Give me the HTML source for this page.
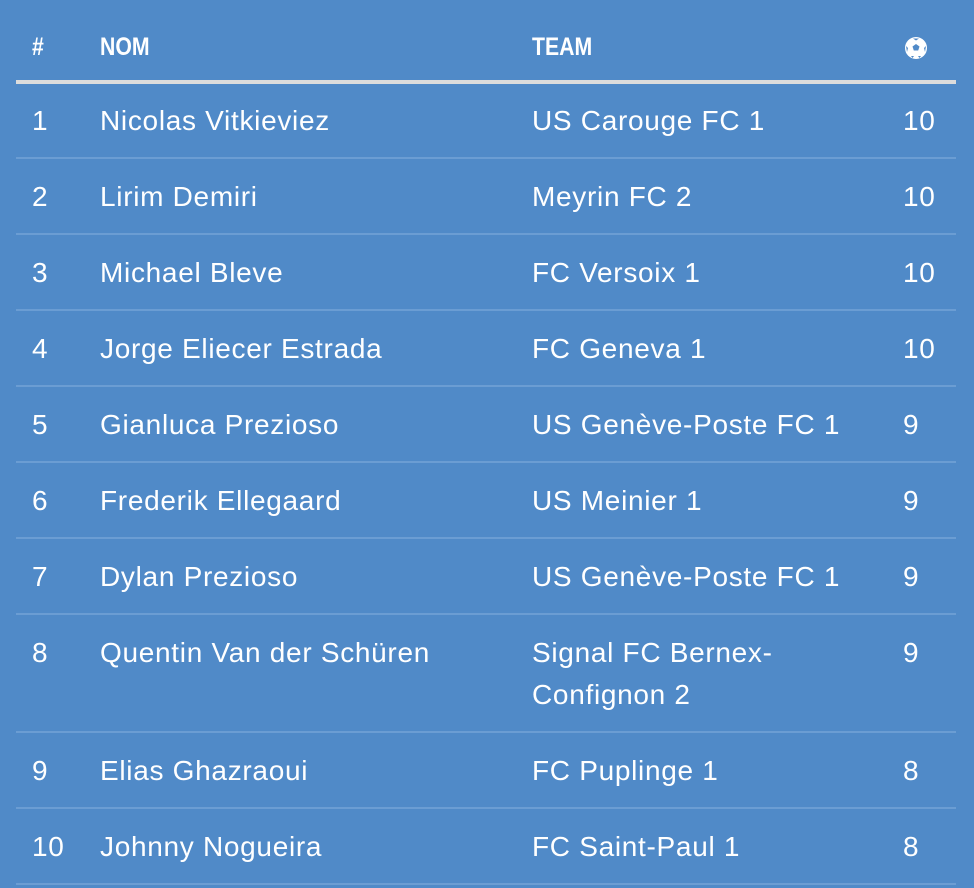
<!DOCTYPE html>
<html><head><meta charset="utf-8"><style>
html,body{margin:0;padding:0;width:974px;height:888px;background:#508ac8;overflow:hidden;font-family:"Liberation Sans",Arial,sans-serif;color:#fff}
.h{position:absolute;top:33px;font-weight:bold;font-size:25px;transform:scaleX(0.85);transform-origin:left}
.hl{position:absolute;left:16px;width:940px;top:80px;height:4px;background:#dcdcdc}
.l{position:absolute;left:16px;width:940px;height:2px;background:#6b9dd3}
.t{position:absolute;font-size:28px;line-height:42px;letter-spacing:0.7px;white-space:nowrap}
</style></head><body>
<div class="h" style="left:32px">#</div>
<div class="h" style="left:100px">NOM</div>
<div class="h" style="left:532px">TEAM</div>
<svg style="position:absolute;left:904px;top:36px" width="24" height="24" viewBox="0 0 24 24"><circle cx="12" cy="12" r="11" fill="#fff"/><polygon points="12,8 15.5,10.5 14.2,14.5 9.8,14.5 8.5,10.5" fill="#508ac8"/><path d="M9 2.5 L12 4.5 L15 2.5 Z M2 10 L4 12 L3 16 Z M22 10 L20 12 L21 16 Z M7 20 L10 20 L8.5 22 Z M17 20 L14 20 L15.5 22 Z" fill="#508ac8"/></svg>
<div class="hl"></div>

<div class="t" style="left:32px;top:100px">1</div><div class="t" style="left:100px;top:100px">Nicolas Vitkieviez</div><div class="t" style="left:532px;top:100px">US Carouge FC 1</div><div class="t" style="left:903px;top:100px">10</div>
<div class="l" style="top:157px"></div>
<div class="t" style="left:32px;top:176px">2</div><div class="t" style="left:100px;top:176px">Lirim Demiri</div><div class="t" style="left:532px;top:176px">Meyrin FC 2</div><div class="t" style="left:903px;top:176px">10</div>
<div class="l" style="top:233px"></div>
<div class="t" style="left:32px;top:252px">3</div><div class="t" style="left:100px;top:252px">Michael Bleve</div><div class="t" style="left:532px;top:252px">FC Versoix 1</div><div class="t" style="left:903px;top:252px">10</div>
<div class="l" style="top:309px"></div>
<div class="t" style="left:32px;top:328px">4</div><div class="t" style="left:100px;top:328px">Jorge Eliecer Estrada</div><div class="t" style="left:532px;top:328px">FC Geneva 1</div><div class="t" style="left:903px;top:328px">10</div>
<div class="l" style="top:385px"></div>
<div class="t" style="left:32px;top:404px">5</div><div class="t" style="left:100px;top:404px">Gianluca Prezioso</div><div class="t" style="left:532px;top:404px">US Genève-Poste FC 1</div><div class="t" style="left:903px;top:404px">9</div>
<div class="l" style="top:461px"></div>
<div class="t" style="left:32px;top:480px">6</div><div class="t" style="left:100px;top:480px">Frederik Ellegaard</div><div class="t" style="left:532px;top:480px">US Meinier 1</div><div class="t" style="left:903px;top:480px">9</div>
<div class="l" style="top:537px"></div>
<div class="t" style="left:32px;top:556px">7</div><div class="t" style="left:100px;top:556px">Dylan Prezioso</div><div class="t" style="left:532px;top:556px">US Genève-Poste FC 1</div><div class="t" style="left:903px;top:556px">9</div>
<div class="l" style="top:613px"></div>
<div class="t" style="left:32px;top:632px">8</div><div class="t" style="left:100px;top:632px">Quentin Van der Schüren</div><div class="t" style="left:532px;top:632px">Signal FC Bernex-<br>Confignon 2</div><div class="t" style="left:903px;top:632px">9</div>
<div class="l" style="top:731px"></div>
<div class="t" style="left:32px;top:750px">9</div><div class="t" style="left:100px;top:750px">Elias Ghazraoui</div><div class="t" style="left:532px;top:750px">FC Puplinge 1</div><div class="t" style="left:903px;top:750px">8</div>
<div class="l" style="top:807px"></div>
<div class="t" style="left:32px;top:826px">10</div><div class="t" style="left:100px;top:826px">Johnny Nogueira</div><div class="t" style="left:532px;top:826px">FC Saint-Paul 1</div><div class="t" style="left:903px;top:826px">8</div>
<div class="l" style="top:883px"></div>
</body></html>
